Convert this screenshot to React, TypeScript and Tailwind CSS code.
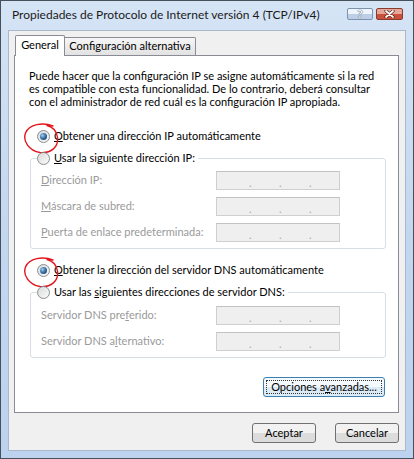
import type { ReactNode } from 'react'

// Hand-drawn red annotation ring around a radio button
function RedRing() {
  return (
    <svg className="absolute left-[-15px] top-[-9px] pointer-events-none" width="40" height="33" viewBox="0 0 40 33">
      <path
        d="M30 4 C20 0 6 2 2.5 11 C-0.5 19 6 29 17 30.5 C28 31.5 36 25 34.5 15 C33.5 9 30 5 24 3.5"
        fill="none" stroke="#e3161e" strokeWidth="1.4" strokeLinecap="round"
      />
    </svg>
  )
}

function Radio({ checked, ring }: { checked?: boolean; ring?: boolean }) {
  return (
    <span className="relative shrink-0 w-[13px] h-[13px] rounded-full border border-[#8b8e90] bg-gradient-to-br from-[#d9dadb] to-[#fafafa] flex items-center justify-center">
      {checked && (
        <span className="w-[7px] h-[7px] rounded-full bg-[radial-gradient(circle_at_35%_35%,#9ccdf2,#2a6497_55%,#173f63)]" />
      )}
      {ring && <RedRing />}
    </span>
  )
}

function IpBox() {
  return (
    <div className="w-[124px] h-[19px] border border-[#cfcfcf] border-t-[#c2c2c2] bg-[#efefef] flex items-end pb-[1px] pl-[32px] gap-[28px] text-[#a8a8a8] leading-none">
      <span className="w-[2px]">.</span>
      <span className="w-[2px]">.</span>
      <span className="w-[2px]">.</span>
    </div>
  )
}

function FieldRow({ children }: { children: ReactNode }) {
  return (
    <div className="grid grid-cols-[175px_124px] items-center">
      <span className="text-[#9a9a9a]">{children}</span>
      <IpBox />
    </div>
  )
}

function RadioLine({ checked, ring, children }: { checked?: boolean; ring?: boolean; children: ReactNode }) {
  return (
    <div className="flex items-center gap-[4px] h-[16px]">
      <Radio checked={checked} ring={ring} />
      <span>{children}</span>
    </div>
  )
}

function Button({ children, focused, w }: { children: ReactNode; focused?: boolean; w: string }) {
  return (
    <div
      className={
        focused
          ? `${w} h-[20px] rounded-[3px] border border-[#3c7fb1] bg-gradient-to-b from-[#f4f9fc] from-50% to-[#dcebf5] to-50% p-[2px]`
          : `${w} h-[20px] rounded-[3px] border border-[#707070] bg-gradient-to-b from-[#f2f2f2] from-50% to-[#dcdcdc] to-50% p-[2px]`
      }
    >
      <div className={`h-full flex items-center justify-center ${focused ? 'border border-dotted border-[#333]' : ''}`}>
        {children}
      </div>
    </div>
  )
}

export default function App() {
  return (
    <div className="w-[414px] h-[459px] flex flex-col border border-[#46505c] bg-gradient-to-b from-[#d5e4f5] via-[#c3d7ef] to-[#bcd2ee] font-['Lato',sans-serif] text-[11px] text-black">

      {/* Title bar */}
      <div className="h-[29px] flex items-center pl-[11px] pr-[10px] shrink-0">
        <span className="text-[12px] text-[#1b1b1b] mt-[-2px]">Propiedades de Protocolo de Internet versión 4 (TCP/IPv4)</span>
        <div className="ml-auto flex items-center gap-[3px] mt-[-4px]">
          <div className="w-[26px] h-[12px] rounded-[2px] border border-[#7d93ad] bg-gradient-to-b from-[#eef4fb] from-45% to-[#bccfe6] to-55% flex items-center justify-center">
            <span className="text-[11px] font-bold leading-none text-[#f7f9fc] [text-shadow:0_0_1px_#4c5a6b,0_0_1px_#4c5a6b]">?</span>
          </div>
          <div className="w-[27px] h-[12px] rounded-[2px] border border-[#8a3b30] bg-gradient-to-b from-[#e6a79b] from-45% to-[#c9513b] to-55% flex items-center justify-center">
            <svg width="11" height="8" viewBox="0 0 11 8">
              <path d="M2 1 L9 7 M9 1 L2 7" stroke="#5a2018" strokeWidth="3.2" strokeLinecap="round" />
              <path d="M2 1 L9 7 M9 1 L2 7" stroke="#ffffff" strokeWidth="1.8" strokeLinecap="round" />
            </svg>
          </div>
        </div>
      </div>

      {/* Client area */}
      <div className="flex-1 mx-[7px] mb-[7px] border border-[#a9b8ca] bg-[#f0f0f0] flex flex-col pl-[5px] pr-[6px] pt-[4px]">

        {/* Tabs */}
        <div className="flex items-end h-[21px] relative z-10">
          <div className="ml-[1px] w-[50px] h-[21px] border border-b-0 border-[#898c95] bg-white rounded-t-[2px] flex items-center justify-center pb-[1px]">
            General
          </div>
          <div className="w-[131px] h-[18px] border border-b-0 border-l-0 border-[#898c95] bg-gradient-to-b from-[#f6f6f6] to-[#e2e2e2] rounded-tr-[2px] flex items-center justify-center mb-[1px]">
            Configuración alternativa
          </div>
        </div>

        {/* Tab panel */}
        <div className="h-[358px] -mt-[1px] border border-[#898c95] bg-white flex flex-col pl-[15px] pr-[12px] pt-[13px]">
          <p className="leading-[13px] pl-[-1px] -ml-[1px]">
            Puede hacer que la configuración IP se asigne automáticamente si la red
            es compatible con esta funcionalidad. De lo contrario, deberá consultar
            con el administrador de red cuál es la configuración IP apropiada.
          </p>

          <div className="mt-[20px] ml-[7px]">
            <RadioLine checked ring>
              <u className="underline-offset-[1px]">O</u>btener una dirección IP automáticamente
            </RadioLine>
          </div>

          <fieldset className="mt-[6px] border border-[#d5dfe5] rounded-[3px] pl-[10px] pb-[6px] pt-[5px] flex flex-col gap-[7px]">
            <legend className="-ml-[4px] pr-[3px]">
              <RadioLine>
                <u>U</u>sar la siguiente dirección IP:
              </RadioLine>
            </legend>
            <FieldRow><u>D</u>irección IP:</FieldRow>
            <FieldRow><u>M</u>áscara de subred:</FieldRow>
            <FieldRow><u>P</u>uerta de enlace predeterminada:</FieldRow>
          </fieldset>

          <div className="mt-[13px] ml-[7px]">
            <RadioLine checked ring>
              <u>O</u>btener la dirección del servidor DNS automáticamente
            </RadioLine>
          </div>

          <fieldset className="mt-[6px] border border-[#d5dfe5] rounded-[3px] pl-[10px] pb-[6px] pt-[6px] flex flex-col gap-[7px]">
            <legend className="-ml-[4px] pr-[3px]">
              <RadioLine>
                Usar las <u>s</u>iguientes direcciones de servidor DNS:
              </RadioLine>
            </legend>
            <FieldRow>Servidor DNS pre<u>f</u>erido:</FieldRow>
            <FieldRow>Servidor DNS a<u>l</u>ternativo:</FieldRow>
          </fieldset>

          <div className="mt-[19px] flex justify-end mr-[1px]">
            <Button focused w="w-[122px]">
              <span>Opciones a<u>v</u>anzadas...</span>
            </Button>
          </div>
        </div>

        {/* Dialog buttons */}
        <div className="mt-[10px] flex justify-end gap-[19px]">
          <Button w="w-[64px]">Aceptar</Button>
          <Button w="w-[64px]">Cancelar</Button>
        </div>
      </div>
    </div>
  )
}
